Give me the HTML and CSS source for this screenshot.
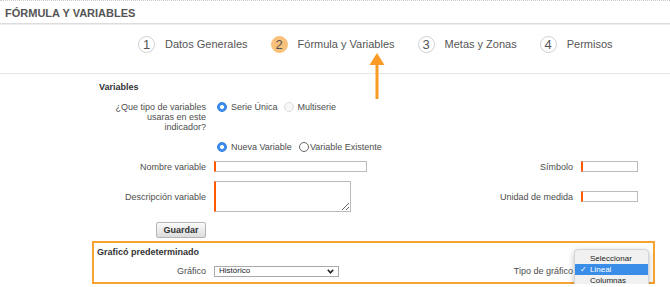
FILE: index.html
```html
<!DOCTYPE html>
<html lang="es">
<head>
  <meta charset="UTF-8">
  <title>Fórmula y Variables</title>
  <link rel="stylesheet" href="styles.css">
</head>
<body>

<div class="titulo">FÓRMULA Y VARIABLES</div>

<div class="pasos">
  <div class="paso"><span class="numero">1</span>Datos Generales</div>
  <div class="paso activo"><span class="numero">2</span>Fórmula y Variables</div>
  <div class="paso"><span class="numero">3</span>Metas y Zonas</div>
  <div class="paso"><span class="numero">4</span>Permisos</div>
  <svg class="flecha" width="18" height="48" viewBox="0 0 18 48">
    <polygon points="9,1 16.5,13 1.5,13" fill="#f99b25"/>
    <rect x="7.5" y="12" width="3" height="35" fill="#f99b25"/>
  </svg>
</div>

<div class="seccion">
  <h3 class="subtitulo">Variables</h3>

  <div class="fila pregunta">
    <label class="etiqueta">¿Que tipo de variables<br>usaras en este<br>indicador?</label>
    <div class="opciones">
      <input type="radio" class="radio" name="tipo" checked>
      <span>Serie Única</span>
      <input type="radio" class="radio apagado" name="tipo" disabled>
      <span>Multiserie</span>
    </div>
  </div>

  <div class="fila fila-radio">
    <span class="etiqueta"></span>
    <div class="opciones">
      <input type="radio" class="radio" name="origen" checked>
      <span>Nueva Variable</span>
      <input type="radio" class="radio vacio" name="origen">
      <span>Variable Existente</span>
    </div>
  </div>

  <div class="fila fila-campo">
    <label class="etiqueta">Nombre variable</label>
    <input type="text" class="texto">
    <div class="derecha">
      <label class="etiqueta">Símbolo</label>
      <input type="text" class="texto corto">
    </div>
  </div>

  <div class="fila fila-campo">
    <label class="etiqueta">Descripción variable</label>
    <textarea class="texto area"></textarea>
    <div class="derecha">
      <label class="etiqueta">Unidad de medida</label>
      <input type="text" class="texto corto">
    </div>
  </div>

  <div class="fila fila-boton">
    <div class="etiqueta boton-celda"><button class="boton">Guardar</button></div>
  </div>
</div>

<div class="seccion recuadro">
  <h3 class="subtitulo">Graficó predeterminado</h3>
  <div class="fila fila-grafico">
    <label class="etiqueta">Gráfico</label>
    <div class="lista">
      <span>Histórico</span>
      <svg width="7" height="5" viewBox="0 0 7 5"><path d="M0.8 0.8 L3.5 3.8 L6.2 0.8" fill="none" stroke="#222" stroke-width="1.6"/></svg>
    </div>
    <div class="derecha">
      <label class="etiqueta">Tipo de gráfico</label>
      <div class="campo-tipo">
        <div class="desplegable">
          <div class="opcion">Seleccionar</div>
          <div class="opcion elegida">Lineal</div>
          <div class="opcion">Columnas</div>
        </div>
      </div>
    </div>
  </div>
</div>

</body>
</html>
```

FILE: styles.css
```css
body {
  margin: 0;
  font-family: "Liberation Sans", Arial, sans-serif;
  color: #555;
  background: #fff;
}
.titulo {
  border-top: 1px dotted #ccc;
  border-bottom: 1px solid #ddd;
  box-shadow: 0 1px 0 #eee;
  padding: 2px 5px 0;
  line-height: 20px;
  font-size: 11px;
  font-weight: bold;
  color: #555;
}
.pasos {
  position: relative;
  display: flex;
  gap: 23px;
  padding: 12px 0 0 138px;
  height: 37px;
  border-bottom: 1px solid #e6e6e6;
}
.paso {
  display: flex;
  align-items: flex-start;
  gap: 10px;
  font-size: 11px;
  line-height: 17px;
}
.numero {
  width: 17px;
  height: 17px;
  box-sizing: border-box;
  border: 1px solid #d0d0d0;
  border-radius: 50%;
  display: flex;
  align-items: center;
  justify-content: center;
  font-size: 13px;
  color: #555;
}
.activo .numero {
  background: #f8c27c;
  border-color: #f8c27c;
}
.flecha {
  position: absolute;
  left: 368px;
  top: 28px;
}

.seccion {
  margin-left: 92px;
  width: 559px;
  padding: 0 2px;
}
.subtitulo {
  margin: 8px 0 0;
  padding-left: 5px;
  font-size: 9px;
  line-height: 10px;
  font-weight: bold;
  color: #333;
}
.fila {
  display: flex;
  align-items: center;
  font-size: 9px;
  line-height: 10px;
  color: #4d4d4d;
}
.etiqueta {
  width: 112px;
  flex-shrink: 0;
  margin-right: 8px;
  text-align: right;
}
.pregunta {
  margin-top: 10px;
  align-items: flex-start;
}
.fila-radio { margin-top: 10px; }
.fila-campo { margin-top: 9px; }
.fila-boton { margin-top: 10px; }
.opciones {
  display: flex;
  align-items: center;
}
.radio {
  appearance: none;
  width: 10px;
  height: 10px;
  margin: 0 4px 0 3px;
  box-sizing: border-box;
  border: 1px solid #2f7fdc;
  border-radius: 50%;
  background: radial-gradient(circle, #fff 0 1.7px, #3b8ef0 2.3px);
}
.radio.apagado {
  margin-left: 6px;
  border-color: #ddd;
  background: #f7f7f7;
}
.radio.vacio {
  margin: 0 1px 0 7px;
  border-color: #666;
  background: #fff;
}
.texto {
  display: block;
  width: 153px;
  height: 11px;
  margin: 0;
  padding: 0;
  box-sizing: border-box;
  border: 1px solid #bbb;
  border-left: 2px solid #ff5a00;
  background: #fff;
}
.corto { width: 57px; }
.area {
  width: 137px;
  height: 31px;
}
.derecha {
  margin-left: auto;
  margin-right: 15px;
  display: flex;
  align-items: center;
}
.derecha .etiqueta { width: auto; }
.boton-celda {
  display: flex;
  justify-content: flex-end;
}
.boton {
  width: 50px;
  height: 16px;
  padding: 0;
  font-family: inherit;
  font-size: 9px;
  font-weight: bold;
  color: #333;
  background: linear-gradient(#fbfbfb, #dcdcdc);
  border: 1px solid #b5b5b5;
  border-radius: 2px;
}

.recuadro {
  margin-top: 3px;
  padding: 4px 0 5px;
  border: 2px solid #f8a232;
}
.recuadro .subtitulo {
  margin: 0;
  padding-left: 3px;
}
.fila-grafico {
  margin-top: 8px;
  height: 12px;
}
.lista {
  width: 125px;
  height: 11px;
  box-sizing: border-box;
  border: 1px solid #aaa;
  padding: 0 4px 0 4px;
  display: flex;
  align-items: center;
  justify-content: space-between;
  font-size: 8px;
  color: #222;
  background: #fff;
}
.campo-tipo {
  position: relative;
  width: 57px;
  height: 11px;
}
.desplegable {
  position: absolute;
  left: -7px;
  top: -17px;
  width: 73px;
  padding: 3px 0;
  background: #f1f1f1;
  border: 1px solid #d4d4d4;
  border-radius: 4px;
  box-shadow: 0 2px 6px rgba(0, 0, 0, 0.25);
  font-size: 8px;
  line-height: 11px;
  color: #222;
}
.opcion {
  position: relative;
  padding-left: 15px;
}
.elegida {
  background: #3a8ee8;
  color: #fff;
}
.elegida::before {
  content: "✓";
  position: absolute;
  left: 5px;
  font-family: "DejaVu Sans", sans-serif;
  font-size: 8px;
}
```
